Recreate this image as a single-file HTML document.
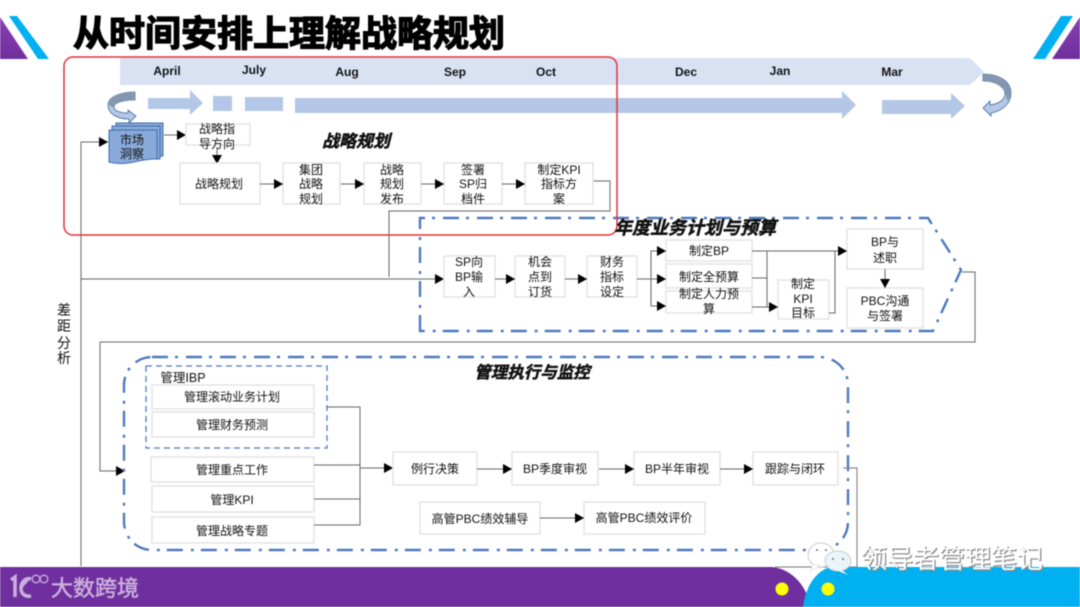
<!DOCTYPE html>
<html><head><meta charset="utf-8">
<style>
html,body{margin:0;padding:0;background:#fff;width:1080px;height:607px;overflow:hidden}
svg{display:block;filter:blur(.45px)}
text{font-family:"Liberation Sans","Noto Sans CJK SC",sans-serif;fill:#111;font-size:12px;text-anchor:middle}
.b{fill:#fff;stroke:#e3e3e3;stroke-width:1.5}
.l{fill:none;stroke:#666;stroke-width:1}
.m{font-weight:bold;fill:#111;font-size:12px}
.h{font-weight:bold;font-style:italic;fill:#111;stroke:#111;stroke-width:.5}
.d{fill:none;stroke:#4f7abf;stroke-width:2.4;stroke-dasharray:16 7 3 8}
</style></head><body>
<svg width="1080" height="607" viewBox="0 0 1080 607" xmlns="http://www.w3.org/2000/svg">
<defs>
<marker id="a" markerUnits="userSpaceOnUse" markerWidth="9" markerHeight="10" refX="9" refY="5" orient="auto"><path d="M0 0L9 5L0 10z" fill="#000"/></marker>
<linearGradient id="pg" x1="0" y1="0" x2="0" y2="1"><stop offset="0" stop-color="#8a3fb0"/><stop offset="1" stop-color="#702f9e"/></linearGradient>
</defs>
<rect width="1080" height="607" fill="#fff"/>

<!-- corners -->
<path d="M0 17L28 59H0z" fill="url(#pg)"/>
<path d="M9 16H17L49 59H38z" fill="#00b0f0"/>
<path d="M1080 17V59H1052z" fill="url(#pg)"/>
<path d="M1061 16H1073L1045 59H1033z" fill="#00b0f0"/>

<!-- title -->
<text x="289" y="46" style="font-size:36px;font-weight:bold;fill:#000;stroke:#000;stroke-width:1.3;font-family:'Noto Sans CJK SC',sans-serif">从时间安排上理解战略规划</text>

<!-- timeline -->
<path d="M120 58H970L984 72L970 85H120z" fill="#d9e2f3"/>
<text class="m" x="167" y="75">April</text>
<text class="m" x="254" y="74">July</text>
<text class="m" x="347" y="76">Aug</text>
<text class="m" x="455" y="76">Sep</text>
<text class="m" x="546" y="76">Oct</text>
<text class="m" x="686" y="76">Dec</text>
<text class="m" x="780" y="75">Jan</text>
<text class="m" x="892" y="76">Mar</text>

<path d="M148 98H190V90L203 103L190 115V109H148z" fill="#b4c7e7"/>
<rect x="213" y="96" width="19" height="15" fill="#b4c7e7"/>
<rect x="245" y="97" width="38" height="14" fill="#b4c7e7"/>
<path d="M295 98H842V91L856 105L842 119V113H295z" fill="#b4c7e7"/>
<path d="M882 100H951V93L965 106L951 119V114H882z" fill="#b4c7e7"/>

<!-- curved arrows -->
<path d="M135 92V100C122 100 114 103 114 107C114 111 121 113 128 113V110L136 116L129 123V119C116 119 108 113 108 105C108 97 120 92 135 92z" fill="#b4c7e7" stroke="#44689c" stroke-width=".8"/>
<path d="M135 92V100C122 100 114 103 114 108C110 106 108 104 108 102C110 96 122 92 135 92z" fill="#8497b0"/>
<path d="M983 74C1000 74 1011 82 1011 93C1011 104 1002 111 991 113V116L983 108L990 101V105C998 104 1005 100 1005 94C1005 87 996 81 983 81z" fill="#b4c7e7" stroke="#44689c" stroke-width=".8"/>
<path d="M983 74C1000 74 1011 82 1011 93C1011 96 1009 99 1007 101C1007 88 996 81 983 81z" fill="#8497b0"/>

<!-- stacked doc -->
<rect x="116" y="123" width="47" height="33" fill="#88a9da" stroke="#3f6fa8"/>
<rect x="112" y="126" width="48" height="33" fill="#88a9da" stroke="#3f6fa8"/>
<path d="M109 130H157V159C140 158 128 167 109 162z" fill="#88a9da" stroke="#3f6fa8"/>
<text x="132" y="144">市场</text>
<text x="132" y="158">洞察</text>

<!-- connectors: left -->
<path class="l" d="M81 142V566" stroke="#777"/>
<path class="l" d="M81 142H108" marker-end="url(#a)"/>
<path class="l" d="M100 342V471H125" marker-end="url(#a)"/>
<path class="l" d="M100 342H975V272H962"/>
<path class="l" d="M81 279H444" marker-end="url(#a)"/>
<path class="l" d="M592 181H610V211H389V277"/>

<!-- strategic -->
<path class="l" d="M164 135H186" marker-end="url(#a)"/>
<path class="l" d="M217 147V164" marker-end="url(#a)"/>
<rect class="b" x="186" y="124" width="64" height="21"/>
<text x="217" y="133">战略指</text><text x="217" y="148">导方向</text>
<rect class="b" x="180" y="163" width="80" height="41"/>
<text x="219" y="188">战略规划</text>
<rect class="b" x="283" y="163" width="57" height="41"/>
<text x="311" y="174">集团</text><text x="311" y="188">战略</text><text x="311" y="203">规划</text>
<rect class="b" x="364" y="163" width="57" height="41"/>
<text x="392" y="174">战略</text><text x="392" y="188">规划</text><text x="392" y="203">发布</text>
<rect class="b" x="444" y="163" width="58" height="41"/>
<text x="473" y="174">签署</text><text x="473" y="188">SP归</text><text x="473" y="203">档件</text>
<rect class="b" x="525" y="163" width="68" height="41"/>
<text x="559" y="174">制定KPI</text><text x="559" y="188">指标方</text><text x="559" y="203">案</text>
<path class="l" d="M260 184H283" marker-end="url(#a)"/>
<path class="l" d="M341 184H364" marker-end="url(#a)"/>
<path class="l" d="M421 184H444" marker-end="url(#a)"/>
<path class="l" d="M502 184H525" marker-end="url(#a)"/>
<text class="h" x="356" y="147" style="font-size:17px">战略规划</text>

<!-- annual -->
<path class="d" d="M420 331V218H928L961 270L933 331z"/>
<rect x="64" y="57" width="553" height="178" rx="9" fill="none" stroke="#e5323a" stroke-width="1.5"/>
<text class="h" x="695" y="234" style="font-size:18px">年度业务计划与预算</text>

<rect class="b" x="444" y="256" width="51" height="41"/>
<text x="469" y="266">SP向</text><text x="469" y="281">BP输</text><text x="469" y="296">入</text>
<rect class="b" x="515" y="256" width="50" height="41"/>
<text x="540" y="266">机会</text><text x="540" y="281">点到</text><text x="540" y="296">订货</text>
<rect class="b" x="587" y="256" width="50" height="41"/>
<text x="612" y="266">财务</text><text x="612" y="281">指标</text><text x="612" y="296">设定</text>
<rect class="b" x="666" y="240" width="86" height="21"/>
<text x="709" y="255">制定BP</text>
<rect class="b" x="666" y="264" width="86" height="24"/>
<text x="709" y="281">制定全预算</text>
<rect class="b" x="666" y="291" width="86" height="22"/>
<text x="709" y="298">制定人力预</text><text x="709" y="313">算</text>
<rect class="b" x="778" y="280" width="51" height="39"/>
<text x="803" y="288">制定</text><text x="803" y="303">KPI</text><text x="803" y="317">目标</text>
<rect class="b" x="847" y="229" width="76" height="40"/>
<text x="885" y="246">BP与</text><text x="885" y="262">述职</text>
<rect class="b" x="847" y="288" width="76" height="40"/>
<text x="885" y="305">PBC沟通</text><text x="885" y="320">与签署</text>
<path class="l" d="M495 279H515" marker-end="url(#a)"/>
<path class="l" d="M565 279H587" marker-end="url(#a)"/>
<path class="l" d="M637 279H666" marker-end="url(#a)"/>
<path class="l" d="M651 279V251H666" marker-end="url(#a)"/>
<path class="l" d="M651 279V306H666" marker-end="url(#a)"/>
<path class="l" d="M752 251H847" marker-end="url(#a)"/>
<path class="l" d="M767 251V307"/>
<path class="l" d="M752 278H767"/>
<path class="l" d="M752 307H778" marker-end="url(#a)"/>
<path class="l" d="M829 313H835V251"/>
<path class="l" d="M885 269V288" marker-end="url(#a)"/>

<!-- gap analysis label -->
<text x="64" y="315" style="font-size:14px">差</text>
<text x="64" y="331" style="font-size:14px">距</text>
<text x="64" y="348" style="font-size:14px">分</text>
<text x="64" y="363" style="font-size:14px">析</text>

<!-- management -->
<rect class="d" x="124" y="357" width="724" height="193" rx="28"/>
<rect x="146" y="366" width="181" height="82" fill="none" stroke="#4f7abf" stroke-width="1.3" stroke-dasharray="6 4"/>
<text class="h" x="532" y="378" style="font-size:16.5px">管理执行与监控</text>
<text x="183" y="382" style="font-size:12.5px">管理IBP</text>
<rect class="b" x="152" y="385" width="162" height="24"/>
<text x="232" y="401">管理滚动业务计划</text>
<rect class="b" x="152" y="412" width="162" height="25"/>
<text x="232" y="429">管理财务预测</text>
<rect class="b" x="151" y="457" width="163" height="25"/>
<text x="232" y="474">管理重点工作</text>
<rect class="b" x="152" y="486" width="162" height="26"/>
<text x="232" y="504">管理KPI</text>
<rect class="b" x="152" y="517" width="162" height="26"/>
<text x="232" y="535">管理战略专题</text>
<path class="l" d="M327 407H360V525H314"/>
<path class="l" d="M314 465H360"/>
<path class="l" d="M314 499H360"/>
<path class="l" d="M360 468H393" marker-end="url(#a)"/>

<rect class="b" x="393" y="452" width="84" height="33"/>
<text x="435" y="473">例行决策</text>
<rect class="b" x="512" y="452" width="86" height="33"/>
<text x="555" y="473">BP季度审视</text>
<rect class="b" x="634" y="452" width="86" height="33"/>
<text x="677" y="473">BP半年审视</text>
<rect class="b" x="753" y="452" width="85" height="33"/>
<text x="795" y="473">跟踪与闭环</text>
<rect class="b" x="420" y="502" width="120" height="32"/>
<text x="480" y="523">高管PBC绩效辅导</text>
<rect class="b" x="584" y="502" width="121" height="32"/>
<text x="644" y="522">高管PBC绩效评价</text>
<path class="l" d="M477 469H512" marker-end="url(#a)"/>
<path class="l" d="M599 469H634" marker-end="url(#a)"/>
<path class="l" d="M720 469H753" marker-end="url(#a)"/>
<path class="l" d="M540 518H584" marker-end="url(#a)"/>
<path d="M843 468H857V567" fill="none" stroke="#8a8a8a" stroke-width="1.2"/>
<path d="M775 567H857" fill="none" stroke="#777" stroke-width="1"/>

<!-- footer -->
<path d="M0 567H772C793 569 808 588 810 607H0z" fill="#702f9e"/>
<path d="M803 607C806 586 815 572 830 567H1080V607z" fill="#00b0f0"/>
<circle cx="782" cy="589" r="6.5" fill="#ffff00"/>
<circle cx="828" cy="589" r="6.5" fill="#ffff00"/>

<!-- footer logo -->
<g fill="none" stroke="#c9b0dc" stroke-width="3.5">
<path d="M11 580L15 577V597"/>
<path d="M31 579C24 577 21 584 21 588C21 594 25 597 31 596"/>
<path d="M21 588L28 580" stroke-width="2"/>
<circle cx="36" cy="579" r="3.8" stroke-width="1.3"/>
<circle cx="44" cy="579" r="3.8" stroke-width="1.3"/>
</g>
<text x="95" y="596" style="font-size:22px;fill:#c9b0dc;stroke:#c9b0dc;stroke-width:.5">大数跨境</text>

<!-- watermark -->
<ellipse cx="821" cy="555" rx="13" ry="12" fill="#fff" stroke="#ccc"/>
<path d="M813 564L810 571L820 566z" fill="#fff" stroke="#ccc" stroke-width=".5"/>
<ellipse cx="838" cy="561" rx="13" ry="10" fill="#eaf5fb" stroke="#ccc"/>
<path d="M842 570L848 575L836 570z" fill="#eaf5fb"/>
<circle cx="817" cy="550" r="1.1" fill="#888"/><circle cx="826" cy="550" r="1.1" fill="#888"/>
<circle cx="833" cy="559" r="1.1" fill="#888"/><circle cx="843" cy="559" r="1.1" fill="#888"/>
<text x="953" y="569" style="font-size:26px;fill:#8c8c8c;stroke:#8c8c8c;stroke-width:.6">领导者管理笔记</text>
<text x="952" y="568" style="font-size:26px;fill:#fff">领导者管理笔记</text>
</svg>
</body></html>
